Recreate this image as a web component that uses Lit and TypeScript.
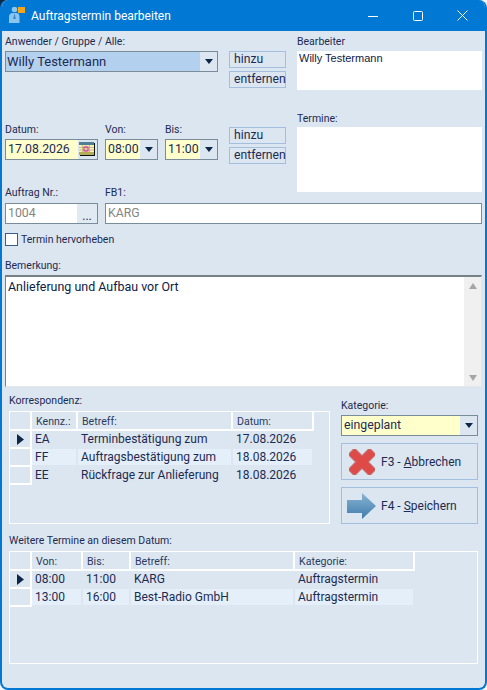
import { LitElement, html, css } from "lit";
import { customElement } from "lit/decorators.js";

const caret = html`<svg class="caret" viewBox="0 0 8 5" width="8" height="5"><path d="M0 0H8L4 5Z" fill="#0d2748"/></svg>`;

@customElement("app-root")
export class AppRoot extends LitElement {
  static styles = css`
    :host { display: block; width: 487px; height: 690px; background: linear-gradient(135deg, #0c2a4a 6px, #f4f6f8 6px); font-family: Roboto, "Noto Sans", sans-serif; font-size: 10.5px; color: #1c2b52; overflow: hidden; }
    * { box-sizing: border-box; }
    .win { width: 487px; height: 690px; background: #dce6f1; border: solid #0078d4; border-width: 0 2px 2px 2px; border-radius: 8px; overflow: hidden; display: flex; flex-direction: column; }
    .title { height: 31px; flex: none; background: #0078d4; color: #fff; display: flex; align-items: center; margin: 0 -2px; padding: 0 2px 0 9px; font-size: 12px; }
    .title .logo { margin-right: 6px; }
    .title .name { flex: 1; }
    .wbtn { width: 45px; height: 31px; display: flex; align-items: center; justify-content: center; }
    .body { flex: 1; padding: 5px 0 0 3px; display: flex; flex-direction: column; }
    label { display: block; height: 11px; line-height: 11px; white-space: nowrap; }
    .top { display: flex; height: 162px; }
    .left { width: 281px; display: flex; flex-direction: column; }
    .right { margin-left: 11px; width: 185px; display: flex; flex-direction: column; }
    .whitebox { background: #fff; color: #0c2145; padding: 0 2px; font-family: "Liberation Sans", sans-serif; font-size: 11px; line-height: 15px; }
    .whitebox.tall { height: 39px; margin-top: 4px; }
    .whitebox.list { height: 65px; margin-top: 3px; }
    .r1 { display: flex; margin-top: 4px; height: 36px; }
    .rowlabels { display: flex; margin-top: 37px; }
    .rowlabels.order { margin-top: 20px; }
    .w100 { width: 100px; }
    .w60 { width: 60px; }
    .termine { margin-top: 23px; }
    .r2 { display: flex; margin-top: 4px; height: 28px; }
    .field { display: flex; height: 21px; flex: none; border: 1px solid #7a8b9a; background: #fff; font-size: 12.3px; line-height: 19px; color: #1c2b52; overflow: hidden; }
    .field .val { flex: 1; padding-left: 2px; white-space: nowrap; overflow: hidden; }
    .yellow .val { background: #ffffcc; }
    .sel .val { background: #b3d0ef; font-size: 13px; padding-left: 1px; }
    .field .drop { background: #dce6f1; width: 17px; flex: none; display: flex; align-items: center; justify-content: center; }
    .field .drop.cal { width: 19px; }
    .field .drop.dots { width: 20px; background: #e1eaf3; font-size: 12px; line-height: 24px; align-items: flex-start; }
    .w213 { width: 213px; }
    .w93 { width: 93px; }
    .w53 { width: 53px; margin-left: 7px; }
    .w377 { width: 377px; margin-left: 7px; }
    .btns { margin-left: 11px; width: 57px; display: flex; flex-direction: column; gap: 3px; flex: none; }
    .btns.raised { margin-top: -12px; }
    .btn { height: 17px; border: 1px solid #a3bfdd; font-size: 12.2px; line-height: 15px; padding-left: 4px; white-space: nowrap; }
    .r3 { display: flex; margin-top: 5px; }
    .gray .val { color: #83857f; }
    .check { display: flex; align-items: center; margin-top: 9px; height: 13px; }
    .box { width: 13px; height: 13px; border: 1px solid #3d5c86; background: #fff; margin-right: 3px; }
    .bem { margin-top: 14px; }
    .memo { margin-top: 4px; height: 112px; width: 477px; background: #fff; border: solid #e6e6e6; border-width: 2px 1px 1px 1px; border-top-color: #777f87; border-left-color: #777f87; display: flex; font-size: 12.45px; color: #0c2145; }
    .memo .txt { flex: 1; padding: 1px 2px; line-height: 17px; }
    .scroll { width: 17px; background: #f0f0f0; display: flex; flex-direction: column; justify-content: space-between; align-items: center; padding: 6px 0 5px; }
    .mid { display: flex; margin-top: 8px; padding-left: 4px; height: 129px; }
    .gridwrap { width: 321px; }
    .grid { margin-top: 5px; border: 1px solid #fff; height: 113px; }
    .grid.wide { width: 469px; }
    .row { display: grid; height: 18px; align-items: stretch; }
    .row.head { height: 19px; }
    .c { padding-left: 3px; font-size: 12px; line-height: 17px; white-space: nowrap; overflow: hidden; }
    .head .c { font-size: 10.6px; padding: 1px 0 0 4px; border-right: 2px solid #fff; border-bottom: 2px solid #fff; color: #2a3a60; }
    .c.ind, .head .c.ind { border-right: 2px solid #fff; border-bottom: 2px solid #fff; display: flex; align-items: center; justify-content: center; padding: 0; }
    .alt .c:not(.ind) { background: #e4eff9; margin: 0 2px 2px 0; }
    .side { margin-left: 11px; width: 137px; padding-top: 5px; }
    .side .field { margin-top: 4px; }
    .action { margin-top: 7px; height: 37px; border: 1px solid #a3bfdd; display: flex; align-items: center; font-size: 12px; }
    .ic { width: 39px; display: flex; justify-content: center; }
    u { text-underline-offset: 1px; }
    .low { margin-top: 11px; padding-left: 4px; }
  `;

  gridRow(cols: string, cells: string[], cls: string, arrow = false) {
    return html`<div class="row ${cls}" style="grid-template-columns:${cols}">
      <div class="c ind">${arrow ? html`<svg width="7" height="11" viewBox="0 0 7 11"><path d="M0 0L7 5.5L0 11Z" fill="#0d2748"/></svg>` : ""}</div>
      ${cells.map((t) => html`<div class="c">${t}</div>`)}
    </div>`;
  }

  render() {
    const k = "22px 46px 155px 81px";
    const w = "22px 51px 48px 164px 120px";
    return html`<div class="win">
      <div class="title">
        <svg class="logo" width="16" height="17" viewBox="0 0 16 17">
          <rect x="9" y="0" width="7" height="6" fill="#f5a51c"/>
          <circle cx="5.5" cy="2.5" r="2.8" fill="#8cc5ee"/>
          <path d="M0 16V10Q0 6 4 6H7Q10.5 6 10.5 10V16Z" fill="#8cc5ee"/>
          <path d="M5.5 6L4 12H7Z" fill="#3f8fd0"/>
        </svg>
        <div class="name">Auftragstermin bearbeiten</div>
        <div class="wbtn"><svg width="10" height="10"><path d="M0 5.5H10" stroke="#fff"/></svg></div>
        <div class="wbtn"><svg width="10" height="10"><rect x=".5" y=".5" width="9" height="9" rx="1" fill="none" stroke="#fff"/></svg></div>
        <div class="wbtn"><svg width="11" height="11"><path d="M.5 .5L10.5 10.5M10.5 .5L.5 10.5" stroke="#fff"/></svg></div>
      </div>
      <div class="body">
        <div class="top">
          <div class="left">
            <label>Anwender / Gruppe / Alle:</label>
            <div class="r1">
              <div class="field sel w213">
                <div class="val">Willy Testermann</div>
                <div class="drop">${caret}</div>
              </div>
              <div class="btns"><div class="btn">hinzu</div><div class="btn">entfernen</div></div>
            </div>
            <div class="rowlabels">
              <label class="w100">Datum:</label><label class="w60">Von:</label><label>Bis:</label>
            </div>
            <div class="r2">
              <div class="field yellow w93">
                <div class="val">17.08.2026</div>
                <div class="drop cal">
                  <svg width="17" height="15" viewBox="0 0 17 15">
                    <rect x="1" y="1" width="15" height="13" fill="#111"/>
                    <rect x="0" y="0" width="15" height="13" fill="#f7f2b8"/>
                    <rect x="0" y="0" width="15" height="3" fill="#4f7f95"/>
                    <rect x="0" y="10" width="15" height="3" fill="#b3ad5a"/>
                    <path d="M0 5.5H15M0 8H15M3.5 3V10M7 3V10M10.5 3V10" stroke="#b9b37a" stroke-width=".8"/>
                    <rect x="5" y="5" width="4" height="4" fill="none" stroke="#d0209a"/>
                  </svg>
                </div>
              </div>
              <div class="field yellow w53"><div class="val">08:00</div><div class="drop">${caret}</div></div>
              <div class="field yellow w53"><div class="val">11:00</div><div class="drop">${caret}</div></div>
              <div class="btns raised"><div class="btn">hinzu</div><div class="btn">entfernen</div></div>
            </div>
            <div class="rowlabels order">
              <label class="w100">Auftrag Nr.:</label><label>FB1:</label>
            </div>
          </div>
          <div class="right">
            <label>Bearbeiter</label>
            <div class="whitebox tall">Willy Testermann</div>
            <label class="termine">Termine:</label>
            <div class="whitebox list"></div>
          </div>
        </div>
        <div class="r3">
          <div class="field gray w93"><div class="val">1004</div><div class="drop dots">...</div></div>
          <div class="field gray w377"><div class="val">KARG</div></div>
        </div>
        <div class="check"><div class="box"></div>Termin hervorheben</div>
        <label class="bem">Bemerkung:</label>
        <div class="memo">
          <div class="txt">Anlieferung und Aufbau vor Ort</div>
          <div class="scroll">
            <svg width="8" height="6"><path d="M0 6H8L4 0Z" fill="#a6a6a6"/></svg>
            <svg width="8" height="6"><path d="M0 0H8L4 6Z" fill="#a6a6a6"/></svg>
          </div>
        </div>
        <div class="mid">
          <div class="gridwrap">
            <label>Korrespondenz:</label>
            <div class="grid">
              ${this.gridRow(k, ["Kennz.:", "Betreff:", "Datum:"], "head")}
              ${this.gridRow(k, ["EA", "Terminbestätigung zum", "17.08.2026"], "", true)}
              ${this.gridRow(k, ["FF", "Auftragsbestätigung zum", "18.08.2026"], "alt")}
              ${this.gridRow(k, ["EE", "Rückfrage zur Anlieferung", "18.08.2026"], "")}
            </div>
          </div>
          <div class="side">
            <label>Kategorie:</label>
            <div class="field yellow"><div class="val">eingeplant</div><div class="drop">${caret}</div></div>
            <div class="action">
              <div class="ic"><svg width="26" height="26" viewBox="0 0 26 26">
                <path d="M5.5 5.5L20.5 20.5M20.5 5.5L5.5 20.5" stroke="#c96a6a" stroke-width="10" stroke-linecap="square"/>
                <path d="M5.5 5.5L20.5 20.5M20.5 5.5L5.5 20.5" stroke="#dd4a48" stroke-width="7.5" stroke-linecap="square"/>
              </svg></div>
              <span>F3 - <u>A</u>bbrechen</span>
            </div>
            <div class="action">
              <div class="ic"><svg width="30" height="26" viewBox="0 0 30 26"><defs><linearGradient id="g" x1="0" y1="0" x2="0" y2="1"><stop offset="0" stop-color="#8ab4d4"/><stop offset="1" stop-color="#3f7cab"/></linearGradient></defs><path d="M0 7H15V0L29 13L15 26V20H0Z" fill="url(#g)"/></svg></div>
              <span>F4 - <u>S</u>peichern</span>
            </div>
          </div>
        </div>
        <div class="low">
          <label>Weitere Termine an diesem Datum:</label>
          <div class="grid wide">
            ${this.gridRow(w, ["Von:", "Bis:", "Betreff:", "Kategorie:"], "head")}
            ${this.gridRow(w, ["08:00", "11:00", "KARG", "Auftragstermin"], "", true)}
            ${this.gridRow(w, ["13:00", "16:00", "Best-Radio GmbH", "Auftragstermin"], "alt")}
          </div>
        </div>
      </div>
    </div>`;
  }
}
